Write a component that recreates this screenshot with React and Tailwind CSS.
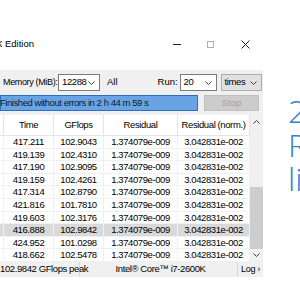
import React from 'react';

const rows = [
  ['417.211', '102.9043'],
  ['419.139', '102.4310'],
  ['417.190', '102.9095'],
  ['419.159', '102.4261'],
  ['417.314', '102.8790'],
  ['421.816', '101.7810'],
  ['419.603', '102.3176'],
  ['416.888', '102.9842'],
  ['424.952', '101.0298'],
  ['418.662', '102.5478'],
];

const font = { fontFamily: '"Liberation Sans", Arial, sans-serif' };

const Chevron = ({ up = false }) => (
  <svg width="7" height="4" viewBox="0 0 7 4" className="shrink-0">
    <polyline
      points={up ? '0.5,3.5 3.5,0.5 6.5,3.5' : '0.5,0.5 3.5,3.5 6.5,0.5'}
      fill="none"
      stroke="#404040"
      strokeWidth="1"
    />
  </svg>
);

const Select = ({ value, className, bg = 'bg-white border-[#7a7a7a]' }) => (
  <div className={`flex items-center justify-between shrink-0 h-[17px] border pl-[3px] pr-[4px] ${bg} ${className}`}>
    <span className="text-[9.5px] tracking-[-0.4px] text-black">{value}</span>
    <Chevron />
  </div>
);

export default function App() {
  return (
    <div className="w-[300px] h-[300px] bg-white flex overflow-hidden text-black" style={font}>
      {/* window */}
      <div className="w-[263px] shrink-0 flex flex-col">
        {/* title bar */}
        <div className="h-[70px] bg-white flex items-start pt-[38px]">
          <span className="text-[9.5px] leading-[12px] ml-[-4px] whitespace-nowrap">X Edition</span>
          <div className="ml-auto flex items-center h-[12px]">
            <div className="w-[8px] h-px bg-[#222] mr-[26px]" />
            <div className="w-[7px] h-[7px] border border-[#b0b0b0] mr-[27px]" />
            <svg width="9" height="9" viewBox="0 0 9 9" className="mr-[13px]">
              <path d="M0.5 0.5 L8.5 8.5 M8.5 0.5 L0.5 8.5" stroke="#222" strokeWidth="1" />
            </svg>
          </div>
        </div>

        {/* client area */}
        <div className="bg-[#f0f0f0] flex flex-col">
          {/* settings row */}
          <div className="flex items-center h-[17px] mt-[4px]">
            <span className="text-[9px] tracking-[-0.35px] ml-[3px] w-[55px] shrink-0 whitespace-nowrap">Memory (MiB):</span>
            <Select value="12288" className="w-[42px]" />
            <span className="text-[9.5px] ml-[7px]">All</span>
            <span className="text-[9.5px] ml-[40px] w-[22px]">Run:</span>
            <Select value="20" className="w-[37px]" />
            <Select value="times" className="w-[41px] ml-[4px]" bg="bg-[#e1e1e1] border-[#adadad]" />
          </div>

          {/* progress row */}
          <div className="flex items-center h-[16px] mt-[4px]">
            <div className="w-[198px] h-full bg-[#68a4e4] border border-[#2e6fbd] flex items-center">
              <span className="text-[9.5px] tracking-[-0.45px] ml-[-1px] whitespace-nowrap text-[#0d1a2b]">
                Finished without errors in 2 h 44 m 59 s
              </span>
            </div>
            <div className="w-[55px] h-full ml-[6px] bg-[#cccccc] border border-[#bfbfbf] flex items-center justify-center">
              <span className="text-[9.5px] text-[#a0a0a0]">Stop</span>
            </div>
          </div>

          {/* table */}
          <div className="flex mt-[4px] h-[147px]">
            <div className="w-[250px] bg-white flex flex-col text-[9.5px] tracking-[-0.4px]">
              <div className="grid grid-cols-[4px_50px_50px_74px_72px] h-[21px] border-b border-[#e5e5e5]">
                <div className="border-r border-[#e5e5e5]" />
                {['Time', 'GFlops', 'Residual', 'Residual (norm.)'].map((h) => (
                  <div key={h} className="flex items-center justify-center border-r border-[#e5e5e5] whitespace-nowrap">
                    {h}
                  </div>
                ))}
              </div>
              {rows.map(([t, g], i) => (
                <div
                  key={i}
                  className={`grid grid-cols-[4px_50px_50px_74px_72px] h-[12.6px] ${i === 7 ? 'bg-[#d9d9d9]' : ''}`}
                >
                  <div className="border-r border-b border-[#f0f0f0]" />
                  {[t, g, '1.374079e-009', '3.042831e-002'].map((v, j) => (
                    <div
                      key={j}
                      className="flex items-center justify-center border-r border-b border-[#f0f0f0] leading-none whitespace-nowrap"
                    >
                      {v}
                    </div>
                  ))}
                </div>
              ))}
            </div>
            {/* scrollbar */}
            <div className="w-[13px] bg-[#f0f0f0] flex flex-col items-center">
              <div className="h-[16px] flex items-center">
                <Chevron up />
              </div>
              <div className="flex-1 w-full flex flex-col">
                <div className="h-[57px]" />
                <div className="w-full h-[62px] bg-[#cdcdcd]" />
              </div>
              <div className="h-[14px] flex items-center">
                <Chevron />
              </div>
            </div>
          </div>

          {/* status bar */}
          <div className="flex items-center h-[15px] text-[9.5px] tracking-[-0.4px]">
            <div className="w-[80px] h-full flex items-center border-r border-[#d7d7d7] whitespace-nowrap">
              <span>102.9842 GFlops peak</span>
            </div>
            <div className="flex-1 h-full flex items-center justify-center whitespace-nowrap">
              <span className="ml-[4px]">Intel® Core™ i7-2600K</span>
            </div>
            <div className="w-[26px] h-full flex items-center justify-center border-l border-[#d7d7d7] whitespace-nowrap text-[9px] tracking-[-0.3px]">
              Log ›
            </div>
          </div>
        </div>
      </div>

      {/* page text beside the window */}
      <div
        className="flex flex-col pl-[25px] pt-[94px] text-[32px] leading-[34px] text-[#3a7fcb] font-light whitespace-nowrap"
        style={{ fontFamily: '"Open Sans", "Noto Sans", sans-serif' }}
      >
        <span>2</span>
        <span>R</span>
        <span>li</span>
      </div>
    </div>
  );
}
